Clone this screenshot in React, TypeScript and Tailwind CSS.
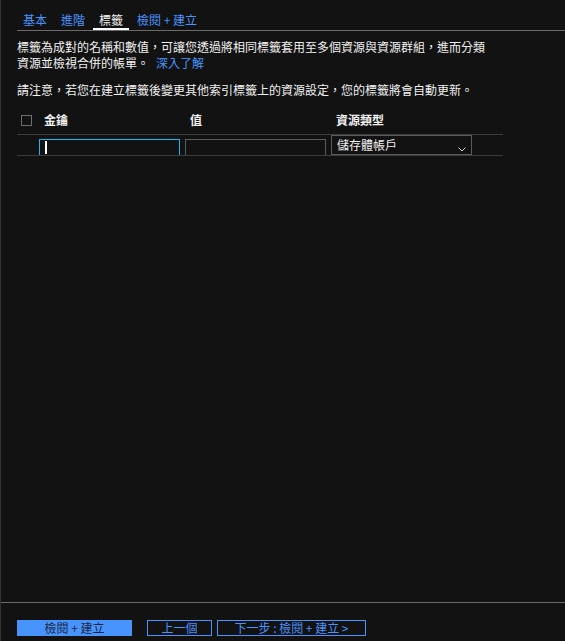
import React from 'react';

const tabs = ['基本', '進階', '標籤', '檢閱 + 建立'];

const App = () => {
  const active = 2;

  return (
    <div
      lang="zh-Hant-TW"
      className="h-screen flex flex-col bg-[#121212] border-l border-[#333333] font-['Noto_Sans_CJK_TC','Noto_Sans',sans-serif] text-[12px] leading-[16px] text-[#f0f0f0]"
    >
      <div className="flex-1 pl-[16px]">
        {/* Tabs */}
        <div className="mt-[12px] flex gap-[2px] border-b border-[#6b6b6b]">
          {tabs.map((t, i) => (
            <div
              key={t}
              className={`px-[6px] border-b-2 whitespace-pre ${
                i === active ? 'border-white text-[#f0f0f0]' : 'border-transparent text-[#4894fe]'
              }`}
            >
              {t}
            </div>
          ))}
        </div>

        {/* Description */}
        <div className="mt-[8px] w-[475px]">
          <div>標籤為成對的名稱和數值，可讓您透過將相同標籤套用至多個資源與資源群組，進而分類</div>
          <div className="flex">
            <span>資源並檢視合併的帳單。</span>
            <a className="ml-[7px] text-[#4894fe]">深入了解</a>
          </div>
        </div>

        <p className="mt-[11px]">
          請注意，若您在建立標籤後變更其他索引標籤上的資源設定，您的標籤將會自動更新。
        </p>

        {/* Tags table */}
        <div className="w-[486px]">
          <div className="mt-[14px] pb-[6px] flex items-center border-b border-[#3c3c3c] font-semibold">
            <div className="w-[22px] flex items-center">
              <div className="ml-[4px] w-[11px] h-[11px] border border-[#6e6e6e]" />
            </div>
            <div className="w-[146px] pl-[5px]">金鑰</div>
            <div className="w-[146px] pl-[5px]">值</div>
            <div className="w-[146px] pl-[5px]">資源類型</div>
          </div>

          <div className="h-[21px] flex border-b border-[#3c3c3c]">
            <div className="w-[22px]" />
            <div className="w-[146px] pt-[4px]">
              <div className="w-[141px] h-[16px] border-t border-x border-[#1ab4f0] pl-[5px] pt-[1px]">
                <div className="w-[2px] h-[13px] bg-white" />
              </div>
            </div>
            <div className="w-[146px] pt-[4px]">
              <div className="w-[141px] h-[16px] border-t border-x border-[#5c5c5c]" />
            </div>
            <div className="w-[146px]">
              <div className="w-[141px] h-[20px] border border-[#5c5c5c] flex items-center justify-between pl-[5px] pr-[5px]">
                <span>儲存體帳戶</span>
                <svg width="8" height="5" viewBox="0 0 8 5" className="mt-[8px]">
                  <polyline points="0.5,0.5 4,4 7.5,0.5" fill="none" stroke="#cfcfcf" strokeWidth="1" />
                </svg>
              </div>
            </div>
          </div>
        </div>
      </div>

      {/* Footer */}
      <div className="h-[39px] border-t border-[#6b6b6b] pl-[16px] pt-[17px] flex">
        <button className="w-[115px] h-[16px] bg-[#4894fe] text-[#1a2740] leading-[14px] text-[12px]">
          檢閱 + 建立
        </button>
        <button className="ml-[15px] w-[65px] h-[16px] border border-[#4894fe] text-[#4894fe] leading-[14px] text-[12px]">
          上一個
        </button>
        <button className="ml-[5px] w-[149px] h-[16px] border border-[#4894fe] text-[#4894fe] leading-[14px] text-[12px]">
          下一步 : 檢閱 + 建立 &gt;
        </button>
      </div>
    </div>
  );
};

export default App;
